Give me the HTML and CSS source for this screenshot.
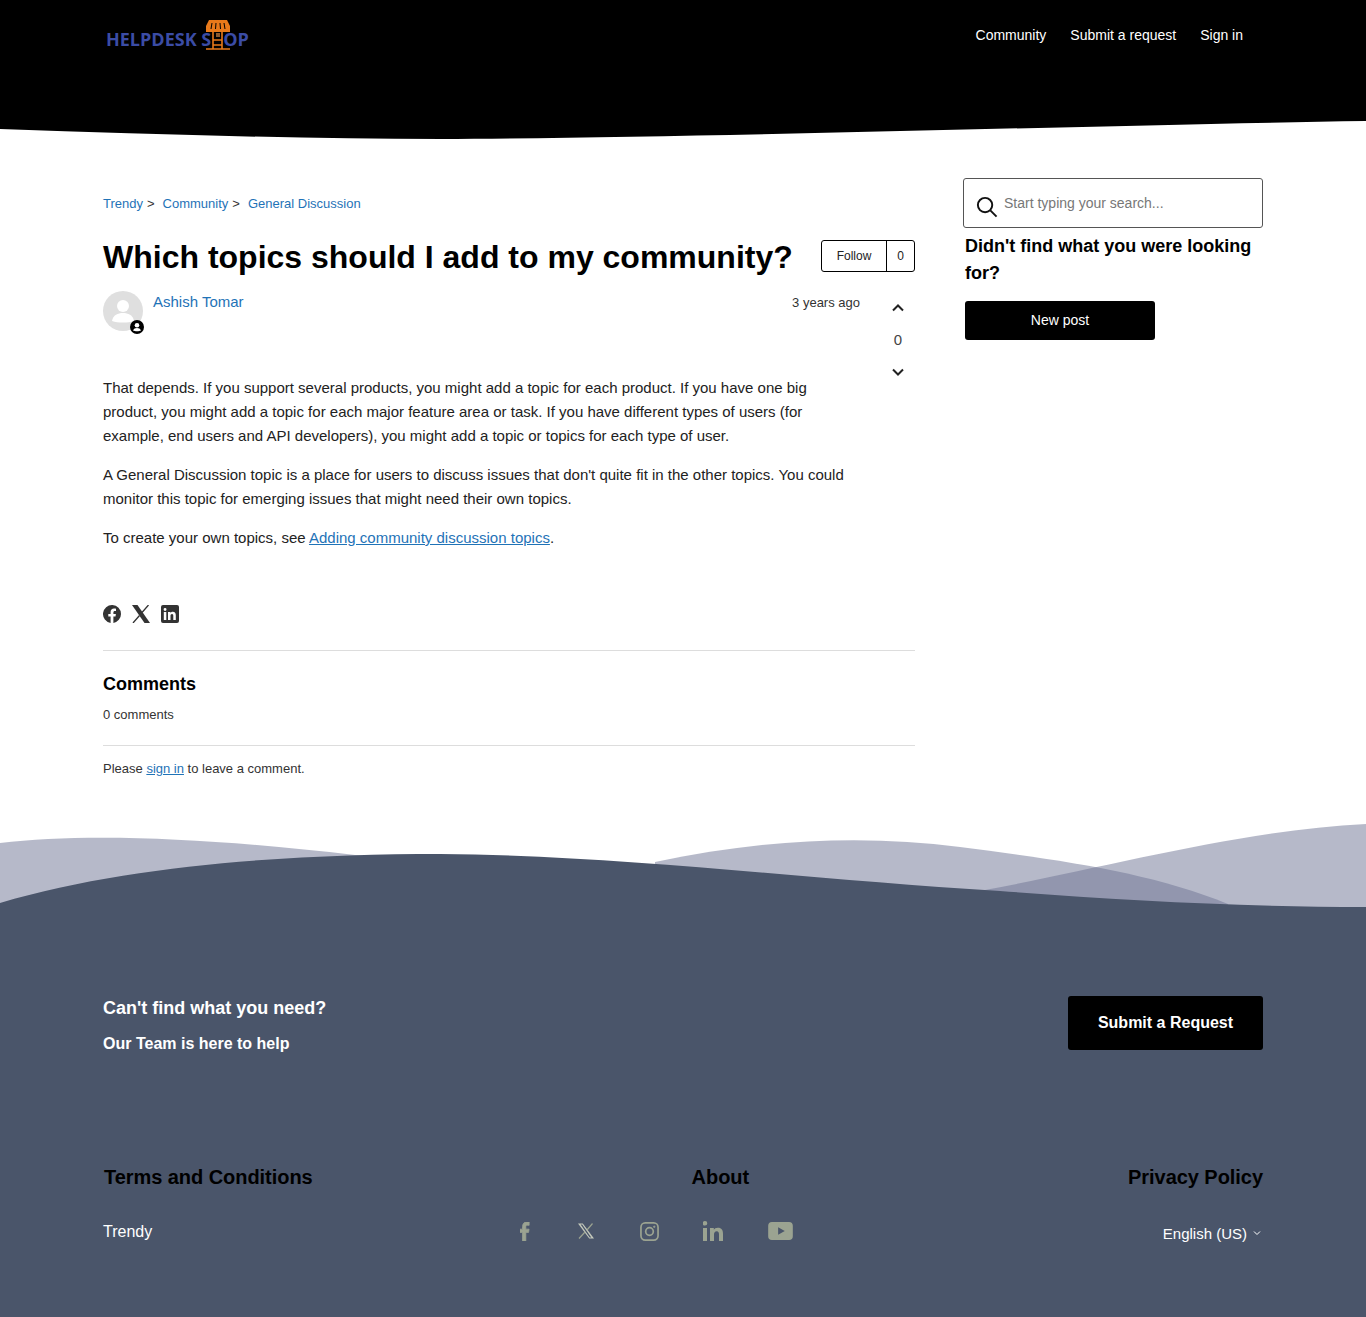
FILE: index.html
```html
<!DOCTYPE html>
<html lang="en">
<head>
<meta charset="utf-8">
<title>Which topics should I add to my community?</title>
<link rel="stylesheet" href="styles.css">
</head>
<body>
<header class="site-header">
  <div class="header-bar">
    <a class="logo" href="#">
      <span class="logo-text">HELPDESK S<span class="logo-gap"></span>OP</span>
      <svg class="logo-icon" viewBox="0 0 24 30" width="24" height="30" fill="none" stroke="#e8791a">
        <path d="M3 0h18l3 6v6H0V6z" fill="#e8791a" stroke="none"/>
        <path d="M6 3l-1 6M10 3l-.5 6M14 3l.5 6M18 3l1 6" stroke="#000" stroke-width="1"/>
        <path d="M7 12v17M16 12v17M7 20h9M7 25h9M0 29h24" stroke-width="1.600"/>
        <rect x="10" y="13" width="4" height="4" fill="#8a5a30" stroke="none"/>
      </svg>
    </a>
    <nav class="nav">
      <a href="#">Community</a>
      <a href="#">Submit a request</a>
      <a href="#">Sign in</a>
    </nav>
  </div>
  <svg class="header-wave" viewBox="0 0 1366 18" preserveAspectRatio="none" width="1366" height="18">
    <path d="M0 8C150 13 300 18 440 18C700 17 1100 4 1366 0V18H0Z" fill="#fff"/>
  </svg>
</header>

<main class="page">
  <article class="post">
    <ol class="crumbs">
      <li><a href="#">Trendy</a><span class="sep">&gt;</span></li>
      <li><a href="#">Community</a><span class="sep">&gt;</span></li>
      <li><a href="#">General Discussion</a></li>
    </ol>
    <div class="title-row">
      <h1>Which topics should I add to my community?</h1>
      <div class="follow"><span class="follow-btn">Follow</span><span class="follow-count">0</span></div>
    </div>
    <div class="post-body-row">
      <div class="post-main">
        <div class="author-row">
          <div class="avatar">
            <svg viewBox="0 0 40 40" width="40" height="40">
              <circle cx="20" cy="20" r="20" fill="#dfdfdf"/>
              <circle cx="20" cy="15" r="6" fill="#fff"/>
              <path d="M9 30c1-6 6-8 11-8s10 2 11 8c-6 2-16 2-22 0z" fill="#fff"/>
            </svg>
            <svg class="avatar-badge" viewBox="0 0 14 14" width="14" height="14">
              <circle cx="7" cy="7" r="7" fill="#000"/>
              <circle cx="7" cy="5.200" r="2.300" fill="#fff"/>
              <path d="M3 10.600c.6-1.900 2.200-2.600 4-2.600s3.400.7 4 2.600c-2 1-6 1-8 0z" fill="#fff"/>
            </svg>
          </div>
          <a class="author" href="#">Ashish Tomar</a>
          <span class="age">3 years ago</span>
        </div>
        <div class="content">
          <p>That depends. If you support several products, you might add a topic for each product. If you have one big product, you might add a topic for each major feature area or task. If you have different types of users (for example, end users and API developers), you might add a topic or topics for each type of user.</p>
          <p>A General Discussion topic is a place for users to discuss issues that don't quite fit in the other topics. You could monitor this topic for emerging issues that might need their own topics.</p>
          <p>To create your own topics, see <a href="#">Adding community discussion topics</a>.</p>
        </div>
      </div>
      <div class="vote">
        <svg viewBox="0 0 12 8" width="12" height="8" fill="none" stroke="#222" stroke-width="2"><path d="M1 6.500l5-5 5 5"/></svg>
        <span class="vote-sum">0</span>
        <svg viewBox="0 0 12 8" width="12" height="8" fill="none" stroke="#222" stroke-width="2"><path d="M1 1.500l5 5 5-5"/></svg>
      </div>
    </div>
    <div class="share">
      <svg viewBox="0 0 18 18" width="18" height="18"><path fill="#333" d="M18 9a9 9 0 1 0-10.400 8.900v-6.300H5.300V9h2.300V7c0-2.300 1.300-3.500 3.400-3.500 1 0 2 .2 2 .2v2.200h-1.100c-1.100 0-1.500.7-1.500 1.400V9h2.500l-.4 2.600h-2.100v6.300A9 9 0 0 0 18 9z"/></svg>
      <svg viewBox="0 0 18 18" width="18" height="18"><path fill="#333" d="M0 0h5.500L18 18h-5.500z"/><path stroke="#333" stroke-width="1.300" d="M16.500 0L10 7.500M7.500 10.500L1 18"/></svg>
      <svg viewBox="0 0 18 18" width="18" height="18"><path fill="#333" fill-rule="evenodd" d="M2 0h14a2 2 0 0 1 2 2v14a2 2 0 0 1-2 2H2a2 2 0 0 1-2-2V2a2 2 0 0 1 2-2zm.8 7v8h2.500V7zm1.250-4a1.450 1.450 0 1 0 0 2.900 1.450 1.450 0 0 0 0-2.900zM7 7v8h2.500v-4.200c0-1.200.5-1.900 1.500-1.900s1.300.7 1.300 1.900V15h2.500v-4.800c0-2.200-1-3.400-2.900-3.400-1.100 0-1.900.5-2.400 1.200V7z"/></svg>
    </div>
    <section class="comments">
      <h2>Comments</h2>
      <p class="comment-count">0 comments</p>
    </section>
    <p class="sign-note">Please <a href="#">sign in</a> to leave a comment.</p>
  </article>

  <aside class="side">
    <form class="search">
      <svg viewBox="0 0 24 24" width="23" height="23" fill="none" stroke="#111" stroke-width="2"><circle cx="10.500" cy="10.500" r="7.500"/><path d="M16 16l6.500 6.500"/></svg>
      <span class="placeholder">Start typing your search...</span>
    </form>
    <h3>Didn't find what you were looking for?</h3>
    <a class="new-post" href="#">New post</a>
  </aside>
</main>

<footer class="site-footer">
  <svg class="footer-wave" viewBox="0 0 1366 84" width="1366" height="84">
    <path d="M0 19C90 8 220 15 355 31L1000 84H0Z" fill="#6d7394" fill-opacity=".5"/>
    <path d="M655 38C760 16 860 10 960 23C1060 36 1150 48 1228 80L1228 84H655Z" fill="#6d7394" fill-opacity=".5"/>
    <path d="M985 66C1100 45 1240 6 1366 0V84H985Z" fill="#6d7394" fill-opacity=".5"/>
    <path d="M0 79C130 40 300 30 440 30C620 31 800 55 1000 67C1120 76 1240 83 1366 83V84H0Z" fill="#4a556a"/>
  </svg>
  <div class="footer-inner">
    <div class="cta">
      <div>
        <p class="cta-title">Can't find what you need?</p>
        <p class="cta-sub">Our Team is here to help</p>
      </div>
      <a class="cta-btn" href="#">Submit a Request</a>
    </div>
    <div class="footer-links">
      <a href="#">Terms and Conditions</a>
      <a href="#">About</a>
      <a href="#">Privacy Policy</a>
    </div>
    <div class="footer-bottom">
      <span class="brand">Trendy</span>
      <div class="social">
        <svg viewBox="0 0 12 20" width="10" height="19" preserveAspectRatio="none"><path fill="#9ba391" stroke="#9ba391" stroke-width=".8" d="M3 20v-9H0V7.500h3V5c0-3 1.800-5 4.700-5H11v3.500H8.700C7.500 3.500 7 4.200 7 5.300v2.200h3.900l-.6 3.500H7v9z"/></svg>
        <svg class="social-x" viewBox="0 0 16 16" width="16" height="16"><path fill="#c3c8bb" d="M0 .5h4.800L16 15.500h-4.800zM2.600 1.600l9.100 12.800h1.600L4.200 1.600z"/><path stroke="#9ba391" stroke-width="1.200" d="M14.500.5L9 7M7 9l-6 6.500"/></svg>
        <svg class="social-ig" viewBox="0 0 20 20" width="19" height="19" fill="none" stroke="#9ba391" stroke-width="1.800"><rect x="1" y="1" width="18" height="18" rx="4.500"/><circle cx="10" cy="10" r="4"/><circle cx="15" cy="5" r=".8" fill="#9ba391" stroke-width=".8"/></svg>
        <svg class="social-in" viewBox="0 0 20 20" width="20" height="20"><path fill="#9ba391" d="M0 7h4v13H0zM2 0a2.300 2.300 0 1 1 0 4.600A2.300 2.300 0 0 1 2 0zM7 7h3.800v1.800c.7-1.200 2-2.100 4-2.100 3.900 0 5.200 2.400 5.200 6V20h-4v-6.400c0-1.900-.5-3.300-2.300-3.300S11 11.700 11 13.600V20H7z"/></svg>
        <svg viewBox="0 0 26 19" width="25" height="18"><path fill="#9ba391" fill-rule="evenodd" d="M4 0h18a4 4 0 0 1 4 4v11a4 4 0 0 1-4 4H4a4 4 0 0 1-4-4V4a4 4 0 0 1 4-4zm6.500 5.500v8l7-4z"/></svg>
      </div>
      <span class="lang">English (US) <svg viewBox="0 0 8 6" width="8" height="6" fill="none" stroke="#fff" stroke-width="1"><path d="M1 1.500l3 3 3-3"/></svg></span>
    </div>
  </div>
</footer>
</body>
</html>
```
FILE: styles.css
```css
* { box-sizing: border-box; }
html, body { margin: 0; padding: 0; }
body { font-family: "Liberation Sans", Arial, sans-serif; color: #000; background: #fff; font-size: 16px; }
a { text-decoration: none; }
svg { display: block; }

.site-header { background: #000; }
.header-bar { height: 121px; padding: 0 123px 0 106px; display: flex; justify-content: space-between; align-items: flex-start; }
.logo { position: relative; display: block; width: 143px; height: 52px; margin-top: 19px; }
.logo-text { position: absolute; left: 0; top: 10px; font-family: "Open Sans", sans-serif; font-weight: 700; font-size: 18px; line-height: 20px; color: #3b4ca5; white-space: nowrap; }
.logo-gap { display: inline-block; width: 12px; }
.logo-icon { position: absolute; left: 100px; top: 1px; }
.nav { display: flex; gap: 24px; margin-top: 27px; font-size: 14px; line-height: 16px; }
.nav a { color: #fff; }
.header-wave { display: block; width: 100%; }

.page { width: 1160px; margin: 39px auto 0; display: flex; justify-content: space-between; align-items: flex-start; }
.post { width: 812px; }
.crumbs { list-style: none; margin: 17px 0 0; padding: 0; display: flex; gap: 8px; font-size: 13px; line-height: 18px; color: #333; }
.crumbs a { color: #1f73b7; }
.sep { margin-left: 4px; }
.title-row { display: flex; justify-content: space-between; align-items: center; margin-top: 24px; }
h1 { margin: 0; font-size: 32px; line-height: 40px; font-weight: 700; }
.follow { display: flex; height: 32px; border: 1px solid #000; border-radius: 3px; font-size: 12px; color: #222; align-items: stretch; margin-top: -2px; }
.follow-btn { width: 65px; display: flex; align-items: center; justify-content: center; border-right: 1px solid #000; }
.follow-count { width: 27px; display: flex; align-items: center; justify-content: center; }

.post-body-row { display: flex; justify-content: space-between; margin-top: 14px; }
.post-main { width: 757px; }
.author-row { display: flex; align-items: flex-start; height: 40px; }
.avatar { position: relative; width: 40px; height: 40px; }
.avatar-badge { position: absolute; left: 27px; top: 29px; }
.author { margin-left: 10px; font-size: 15px; line-height: 22px; color: #1f73b7; }
.age { margin-left: auto; font-size: 13px; line-height: 24px; color: #333; }
.content { margin-top: 45px; font-size: 15px; line-height: 24px; color: #222; }
.content p { margin: 0 0 15px; }
.content a { color: #1f73b7; text-decoration: underline; }

.vote { width: 34px; display: flex; flex-direction: column; align-items: center; padding-top: 13px; }
.vote-sum { font-size: 15px; line-height: 24px; color: #444; margin: 16px 0; }

.share { display: flex; gap: 11px; margin-top: 40px; }
.comments { margin-top: 27px; border-top: 1px solid #ddd; border-bottom: 1px solid #ddd; padding: 22px 0 14px; }
.comments h2 { margin: 0; font-size: 18px; line-height: 22px; font-weight: 700; }
.comment-count { margin: 11px 0 7px; font-size: 13px; line-height: 18px; color: #333; }
.sign-note { margin: 14px 0 0; font-size: 13px; line-height: 18px; color: #333; }
.sign-note a { color: #1f73b7; text-decoration: underline; }

.side { width: 300px; }
.search { display: flex; align-items: center; height: 50px; border: 1px solid #555; border-radius: 3px; padding: 6px 0 0 11px; }
.placeholder { margin-left: 6px; margin-top: -6px; font-size: 14px; color: #777; }
h3 { margin: 5px 0 0 2px; font-size: 18px; line-height: 27px; font-weight: 700; }
.new-post { display: flex; align-items: center; justify-content: center; width: 190px; height: 39px; margin: 14px 0 0 2px; padding-bottom: 2px; background: #000; color: #fff; border-radius: 3px; font-size: 14px; }

.site-footer { margin-top: 46px; }
.footer-wave { display: block; width: 100%; }
.footer-inner { background: #4a556a; height: 409px; padding: 88px 103px 0; }
.cta { display: flex; justify-content: space-between; align-items: flex-start; }
.cta p { margin: 0; color: #fff; font-weight: 700; }
.cta-title { font-size: 18px; line-height: 24px; }
.cta-sub { font-size: 16px; line-height: 24px; margin-top: 12px !important; }
.cta-btn { display: flex; align-items: center; justify-content: center; width: 195px; height: 54px; background: #000; color: #fff; font-weight: 700; font-size: 16px; border-radius: 3px; }
.footer-links { display: flex; justify-content: space-between; margin-top: 108px; padding-left: 1px; font-size: 20px; line-height: 26px; font-weight: 700; letter-spacing: -.05px; }
.footer-links a { color: #000; }
.footer-bottom { position: relative; display: flex; justify-content: space-between; align-items: center; margin-top: 27px; height: 30px; color: #fff; }
.brand { font-size: 16px; }
.social { position: absolute; left: 417px; top: 4px; display: flex; gap: 45px; align-items: center; }
.social-x { margin-left: 3px; }
.social-ig { margin-left: 1px; }
.social-in { margin-left: -1px; }
.lang { display: flex; align-items: center; gap: 6px; font-size: 15px; padding: 2px 2px 0 0; }
```
